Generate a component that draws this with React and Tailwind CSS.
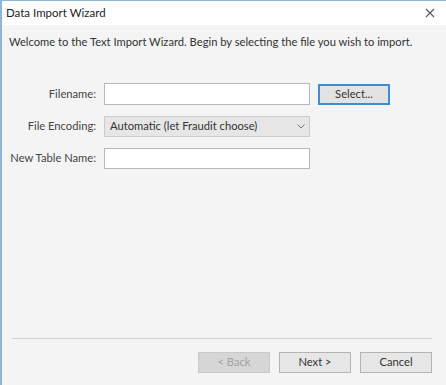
import React from 'react';

const font = { fontFamily: 'Lato, "Noto Sans", sans-serif' };

const Btn = ({ children, disabled, focused }) => (
  <button
    className={
      disabled
        ? 'w-[72px] h-[21px] text-[11.2px] bg-[#d6d6d6] border border-[#c9c9c9] text-[#a3a3a3]'
        : focused
        ? 'w-[72px] h-[21px] text-[11.2px] bg-[#e3e3e3] border-2 border-[#3d8ed9] text-[#333]'
        : 'w-[72px] h-[21px] text-[11.2px] bg-[#e6e6e6] border border-[#b3b3b3] text-[#333]'
    }
  >
    {children}
  </button>
);

export default function App() {
  return (
    <div
      className="w-[446px] h-[385px] flex flex-col border-l-2 border-t border-[#8db4d9] text-[11.2px] text-[#333] whitespace-nowrap"
      style={font}
    >
      {/* title bar */}
      <div className="h-[24px] bg-white flex items-center justify-between pl-[4px] pr-[11px]">
        <span className="text-[11.5px] text-[#222]">Data Import Wizard</span>
        <svg width="10" height="10" viewBox="0 0 10 10">
          <path d="M1 1L9 9M9 1L1 9" stroke="#555" strokeWidth="1.1" />
        </svg>
      </div>

      <div className="flex-1 bg-[#f4f4f4] flex flex-col">
        <p className="pl-[7px] pt-[9px] leading-[16px]">
          Welcome to the Text Import Wizard. Begin by selecting the file you wish to import.
        </p>

        {/* form */}
        <div className="mt-[33px] flex flex-col gap-[11px]">
          <div className="flex items-center">
            <span className="w-[94px] text-right text-[#444]">Filename:</span>
            <input className="ml-[8px] w-[206px] h-[22px] bg-white border border-[#b8b8b8]" />
            <div className="ml-[8px]">
              <Btn focused>Select...</Btn>
            </div>
          </div>
          <div className="flex items-center">
            <span className="w-[94px] text-right text-[#444]">File Encoding:</span>
            <div className="ml-[8px] w-[206px] h-[21px] bg-[#e6e6e6] border border-[#cbcbcb] flex items-center justify-between pl-[5px] pr-[4px]">
              <span className="text-[#333]">Automatic (let Fraudit choose)</span>
              <svg width="8" height="5" viewBox="0 0 8 5">
                <path d="M0.5 0.5L4 4L7.5 0.5" fill="none" stroke="#777" strokeWidth="1" />
              </svg>
            </div>
          </div>
          <div className="flex items-center">
            <span className="w-[94px] text-right text-[#444]">New Table Name:</span>
            <input className="ml-[8px] w-[206px] h-[21px] bg-white border border-[#b8b8b8]" />
          </div>
        </div>

        <div className="flex-1" />

        {/* footer */}
        <div className="ml-[10px] mr-[14px] border-t border-[#d2d2d2]" />
        <div className="flex justify-end gap-[9px] pr-[14px] pt-[13px] pb-[12px]">
          <Btn disabled>&lt; Back</Btn>
          <Btn>Next &gt;</Btn>
          <Btn>Cancel</Btn>
        </div>
      </div>
    </div>
  );
}
